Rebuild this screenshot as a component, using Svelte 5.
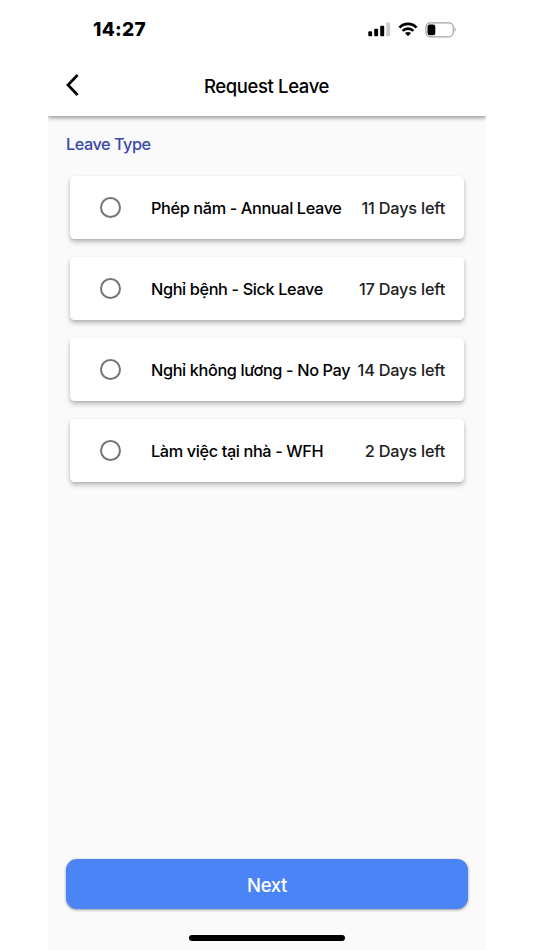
<script lang="ts">
	interface LeaveType {
		id: string,
		name: string,
		daysLeft: number
	}

	const leaveTypes: LeaveType[] = [
		{ id: "annual", name: "Phép năm - Annual Leave", daysLeft: 11 },
		{ id: "sick", name: "Nghỉ bệnh - Sick Leave", daysLeft: 17 },
		{ id: "unpaid", name: "Nghỉ không lương - No Pay", daysLeft: 14 },
		{ id: "wfh", name: "Làm việc tại nhà - WFH", daysLeft: 2 }
	];

	let selected = $state("");
</script>

<div class="phone">
	<header>
		<div class="status-bar">
			<span class="time">14:27</span>
			<div class="indicators">
				<svg class="signal" width="23" height="15" viewBox="0 0 23 15">
					<rect x="0.3" y="9.2" width="3.8" height="5" rx="1" />
					<rect x="6.2" y="6.8" width="3.9" height="7.4" rx="1" />
					<rect x="12.2" y="3.8" width="4" height="10.4" rx="1" />
					<rect x="18.2" y="0.4" width="4" height="13.8" rx="1" fill="#ccc" />
				</svg>
				<svg class="wifi" width="20" height="15" viewBox="0 0 20 15">
					<g fill="none" stroke="#000" stroke-width="2.7">
						<path d="M1.5 5.6C6.2 0.6 13.8 0.6 18.5 5.6" />
						<path d="M4.6 8.9C7.7 5.8 12.3 5.8 15.4 8.9" />
					</g>
					<path d="M10 14.2 6.9 11.1C8.6 9.5 11.4 9.5 13.1 11.1Z" />
				</svg>
				<svg class="battery" width="32" height="16" viewBox="0 0 32 16">
					<rect x="0.9" y="0.9" width="27.4" height="13.9" rx="4.2" fill="none" stroke="#a5a5a5" stroke-width="1.2" />
					<rect x="2.5" y="2.5" width="7.8" height="10.8" rx="2.2" />
					<path d="M29.6 5.6C31.2 6.3 31.2 9.2 29.6 9.9Z" fill="#a5a5a5" />
				</svg>
			</div>
		</div>
		<nav>
			<button class="back" aria-label="Back">
				<svg width="16" height="24" viewBox="0 0 16 24">
					<path d="M13.6 2 4 12l9.6 10" fill="none" stroke="#000" stroke-width="2.7" />
				</svg>
			</button>
			<h1>Request Leave</h1>
		</nav>
	</header>

	<main>
		<h2>Leave Type</h2>
		<div class="options">
			{#each leaveTypes as leave (leave.id)}
				<label class="option">
					<input type="radio" name="leave" value={leave.id} bind:group={selected} />
					<span class="name">{leave.name}</span>
					<span class="days">{leave.daysLeft} Days left</span>
				</label>
			{/each}
		</div>
	</main>

	<footer>
		<button class="next">Next</button>
		<div class="home-indicator"></div>
	</footer>
</div>

<style>
	:global(body) {
		margin: 0;
		background: #fff;
	}

	.phone {
		display: flex;
		flex-direction: column;
		box-sizing: border-box;
		width: 438px;
		height: 950px;
		margin-left: 48px;
		overflow: hidden;
		background: #fafafa;
		color: #000;
		font-family: Inter, sans-serif;
	}

	button {
		border: 0;
		padding: 0;
		font: inherit;
		cursor: pointer;
	}

	svg {
		display: block;
	}

	header {
		height: 116px;
		flex-shrink: 0;
		background: #fff;
		box-shadow: 0 2px 4px rgba(0, 0, 0, 0.32), 0 1px 7px rgba(0, 0, 0, 0.1);
	}

	.status-bar {
		display: flex;
		justify-content: space-between;
		align-items: center;
		height: 59px;
		padding: 0 29px 0 45px;
	}

	.time {
		font-size: 19px;
		font-weight: 800;
		letter-spacing: 0.3px;
	}

	.indicators {
		display: flex;
		align-items: center;
	}

	.wifi {
		margin-left: 7px;
	}

	.battery {
		margin-left: 7px;
	}

	nav {
		display: grid;
		grid-template-columns: 40px 1fr 40px;
		align-items: center;
		height: 52px;
		padding: 0 16px;
	}

	.back {
		width: 16px;
		margin-top: -1px;
		background: none;
	}

	h1 {
		margin: 2px 1px 0 0;
		font-size: 18.5px;
		font-weight: 500;
		letter-spacing: -0.38px;
		text-align: center;
	}

	main {
		flex: 1;
		padding: 18px 22px 0;
	}

	h2 {
		margin: 0 0 21px -4px;
		font-size: 16.3px;
		font-weight: 500;
		line-height: 21px;
		letter-spacing: -0.48px;
		color: #3949ab;
	}

	.options {
		display: flex;
		flex-direction: column;
		gap: 18px;
	}

	.option {
		display: flex;
		align-items: center;
		box-sizing: border-box;
		width: 394px;
		height: 63px;
		padding: 0 19px 0 30px;
		border-radius: 4.5px;
		background: #fff;
		box-shadow: 0 3px 5px rgba(0, 0, 0, 0.25), 0 1px 2px rgba(0, 0, 0, 0.08);
		font-size: 16.3px;
		font-weight: 500;
		white-space: nowrap;
		cursor: pointer;
	}

	input {
		appearance: none;
		box-sizing: border-box;
		flex-shrink: 0;
		width: 21px;
		height: 21px;
		margin: 0 30px 0 0;
		border: 2px solid #757575;
		border-radius: 50%;
	}

	input:checked {
		border-width: 6px;
		border-color: #4a84f7;
	}

	.name {
		letter-spacing: -0.37px;
	}

	.days {
		margin-left: auto;
		letter-spacing: -0.2px;
		color: #212121;
	}

	.next {
		display: block;
		width: 402px;
		height: 50px;
		margin: 0 auto 26px;
		padding-top: 1px;
		border-radius: 11px;
		background: #4a84f7;
		box-shadow: 0 1px 3px rgba(0, 0, 0, 0.4);
		color: #fff;
		font-size: 18.5px;
		font-weight: 500;
		letter-spacing: -0.35px;
	}

	.home-indicator {
		width: 156px;
		height: 6px;
		margin: 0 auto 9px;
		border-radius: 3px;
		background: #000;
	}
</style>
